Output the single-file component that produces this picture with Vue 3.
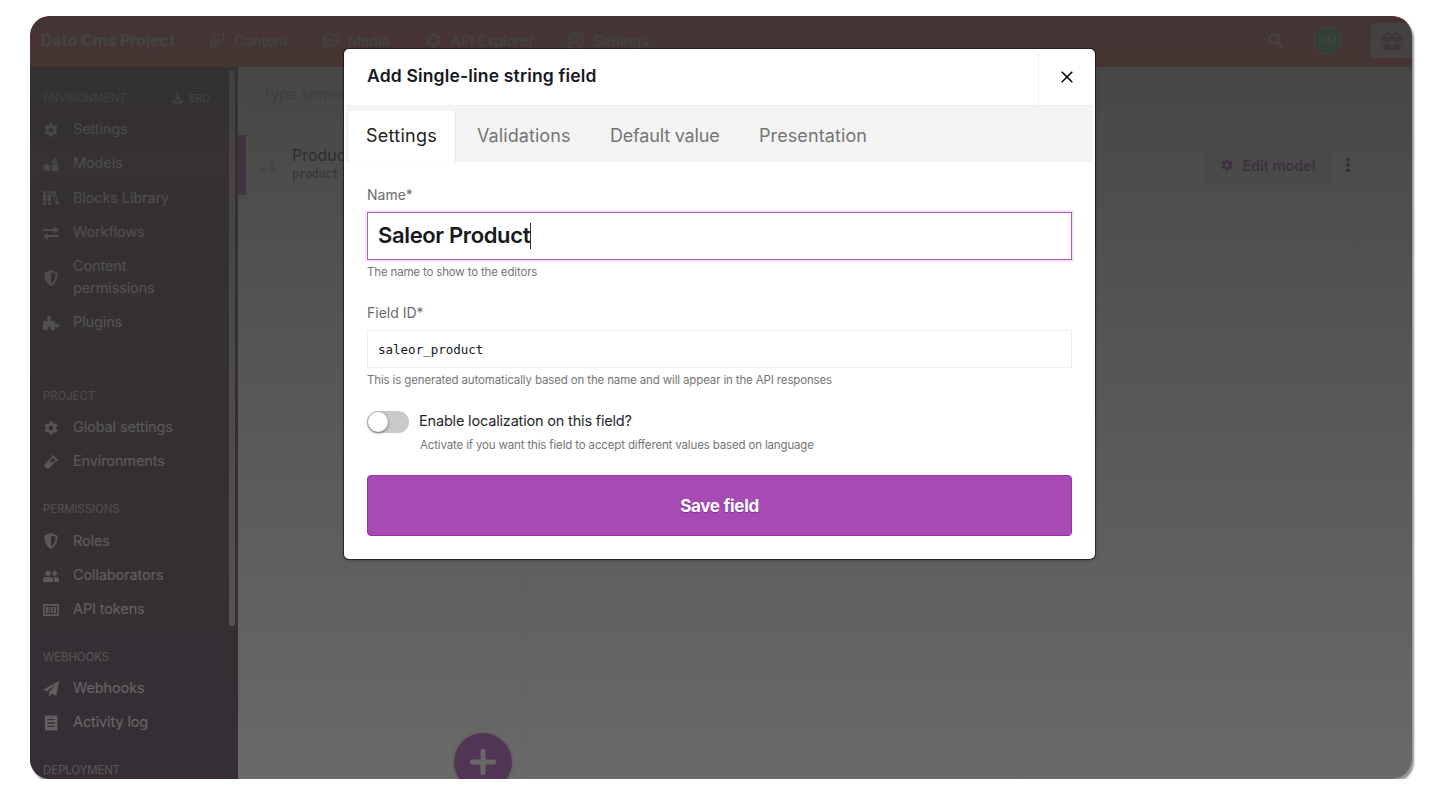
<script setup>
const shapes = 'M12 1l5.5 9h-11zM6 12.5a5 5 0 1 1 0 10 5 5 0 0 1 0-10zM13.5 13h9v9h-9z'
const gear =
  'M19.4 13a7.8 7.8 0 0 0 0-2l2.5-1.9-2.5-4.2-2.9 1.2a7.5 7.5 0 0 0-1.8-1L14.3 2H9.7l-.4 3.1a7.5 7.5 0 0 0-1.8 1L4.6 4.9 2.1 9.1 4.6 11a7.8 7.8 0 0 0 0 2l-2.5 1.9 2.5 4.2 2.9-1.2a7.5 7.5 0 0 0 1.8 1l.4 3.1h4.6l.4-3.1a7.5 7.5 0 0 0 1.8-1l2.9 1.2 2.5-4.2zM12 8.6a3.4 3.4 0 1 1 0 6.8 3.4 3.4 0 0 1 0-6.8z'
const shield = 'M12 0l10 4c0 9-3 16-10 20C5 20 2 13 2 4zM12 3.2v17.3c4.6-3 6.8-8 7-14.5z'
const sideShapes = 'M17.500 1l5.500 9.500H12zM5.500 12.500a5 5 0 1 1 0 10 5 5 0 0 1 0-10zM13 12.500h10v10H13z'
const groups = [
  {
    title: 'ENVIRONMENT',
    erd: true,
    items: [
      { t: 'Settings', d: gear },
      { t: 'Models', d: sideShapes, on: true },
      {
        t: 'Blocks Library',
        d: 'M0 2h5v3H0zM0 6.5h5V17H0zM0 18.5h5V22H0zM7 2h5v3H7zM7 6.5h5V17H7zM7 18.5h5V22H7zM13 3l5-1.5 6 19-5 1.5zM15.3 5.5l3.700 12 2-.6-3.700-12z'
      },
      { t: 'Workflows', d: 'M0 6h17V2l7 5.5-7 5.5V9H0zM24 15H7v-3.5L0 17l7 5.5V18h17z' },
      { t: 'Content permissions', two: true, d: shield },
      {
        t: 'Plugins',
        d: 'M0 9h7V6.5a3 3 0 1 1 4 0V9h7v5h2a2.5 2.5 0 1 1 0 4h-2v5h-6v-3a2.5 2.5 0 0 0-5 0v3H0z'
      }
    ]
  },
  {
    title: 'PROJECT',
    split: true,
    items: [
      { t: 'Global settings', d: gear },
      {
        t: 'Environments',
        d: 'M15 1l8 8-2 2-1-.5L9 21.5A5 5 0 0 1 2.5 15L13.5 4 13 3zM15.5 5.5L9.5 12h7l2-2.5z'
      }
    ]
  },
  {
    title: 'PERMISSIONS',
    items: [
      { t: 'Roles', d: shield },
      {
        t: 'Collaborators',
        d: 'M7.5 4a4 4 0 1 1 0 8 4 4 0 0 1 0-8zM17.5 4.5a3.5 3.5 0 1 1 0 7 3.5 3.5 0 0 1 0-7zM0 21v-3c0-3 2-4.5 4.5-4.5h6c2.5 0 4.5 1.5 4.5 4.5v3zM17 21v-3c0-2-.5-3.3-1.5-4.5H19c3 0 5 1.5 5 4.5v3z'
      },
      {
        t: 'API tokens',
        d: 'M0 3h24v18H0zM2.5 5.5v13h19v-13zM4.5 7.5H8v9H4.5zM9.5 7.5h1.500v9H9.5zM12.5 7.5H15v9h-2.500zM16.5 7.5h3v9h-3z'
      }
    ]
  },
  {
    title: 'WEBHOOKS',
    items: [
      { t: 'Webhooks', d: 'M24 0l-4 22-7-3-4 5v-7L20 4 6 15.500 0 13z' },
      {
        t: 'Activity log',
        d: 'M3 0l2.5 2L8 0l2.5 2L12 0l2.5 2L17 0l2 2 2.5-2v24L19 22l-2 2-2.5-2-2.5 2-1.500-2L8 24l-2.5-2L3 24zM6.5 6v2h11V6zM6.5 11v2h11v-2zM6.5 16v2h11v-2z'
      }
    ]
  },
  { title: 'DEPLOYMENT', items: [] }
]
const tabs = ['Settings', 'Validations', 'Default value', 'Presentation']
</script>

<template>
  <div class="frame">
    <header class="top">
      <span class="brand">Dato Cms Project</span>
      <nav>
        <a class="n1">
          <svg viewBox="0 0 24 24" class="line"><path d="M1 23L16 8M4.500 19.500C2 12 8 4 23 1c0 9-5 19-18.500 18.500M9 15h7M12.500 11.500h6.500" /></svg>
          Content</a>
        <a class="n2">
          <svg viewBox="0 0 24 24" class="line"><rect x="4.500" y="3" width="18.500" height="14.500" rx="2.500" /><path d="M4.500 6.500C2 6.500 1 7.500 1 9v9c0 2 1 3 3 3h13c1.500 0 2.500-1 2.500-3M5 15.500l5-5.500 4.500 4.500L17.500 11l5 5" /><circle cx="16" cy="7" r="1.200" /></svg>
          Media</a>
        <a class="n3">
          <svg viewBox="0 0 24 24" class="line"><path d="M12 3l8 4.500v9L12 21l-8-4.500v-9zM12 3l8 13.500H4z" /><g class="dots"><circle cx="12" cy="3" r="2" /><circle cx="20" cy="7.500" r="2" /><circle cx="20" cy="16.500" r="2" /><circle cx="12" cy="21" r="2" /><circle cx="4" cy="16.500" r="2" /><circle cx="4" cy="7.500" r="2" /></g></svg>
          API Explorer</a>
        <a class="n4">
          <svg viewBox="0 0 24 24" class="line"><path d="M10 1.500h4l.7 3 2.300 1 2.700-1.600 2.700 2.700-1.600 2.700 1 2.300 1 .4v3l-2 .7-1 2.300 1.600 2.700-2.700 2.700-2.700-1.600-2.300 1-.7 1.400h-3l-.7-1.400-2.300-1-2.700 1.600-2.700-2.700L5.200 18l-1-2.300-2.700-.7v-4l2.700-.7 1-2.300L3.600 5.300l2.700-2.700L9 4.200z" /><circle cx="12" cy="12" r="4" /></svg>
          Settings</a>
      </nav>
      <div class="tools">
        <svg viewBox="0 0 24 24" class="find"><circle cx="9.500" cy="9.500" r="7.500" /><path d="M15 15l7.500 7.500" /></svg>
        <i class="rule"></i>
        <span class="avatar">DM</span>
        <span class="gift">
          <svg viewBox="0 0 24 22"><path d="M0 6h24v6H0zM2 14h9v8H2zM13 14h9v8h-9z" /><path class="bow" d="M12 6C8-1 3 1 4.500 6M12 6c4-7 9-5 7.500 0" /></svg>
        </span>
      </div>
    </header>

    <div class="body">
      <aside class="side">
        <section v-for="g in groups" :key="g.title" :class="{ split: g.split }">
          <h6>
            <span>{{ g.title }}</span>
            <span v-if="g.erd" class="erd"><svg viewBox="0 0 24 24"><path d="M9.500 0h5v8H20l-8 8-8-8h5.500zM0 15h5l5 4h4l5-4h5v8H0z" /></svg>ERD</span>
          </h6>
          <div v-for="i in g.items" :key="i.t" class="item" :class="{ on: i.on, two: i.two }">
            <svg viewBox="0 0 24 24"><path fill-rule="evenodd" :d="i.d" /></svg>
            <span>{{ i.t }}</span>
          </div>
        </section>
        <i class="scroll"></i>
      </aside>

      <div class="models">
        <div class="search">Type something...</div>
        <div class="model">
          <svg viewBox="0 0 24 24"><path :d="sideShapes" /></svg>
          <div><b>Product</b><code>product</code></div>
        </div>
        <span class="fab"><svg viewBox="0 0 26 26"><path d="M13 2.500v21M2.500 13h21" /></svg></span>
      </div>

      <main class="detail">
        <div class="actions">
          <span class="edit"><svg viewBox="0 0 24 24"><path fill-rule="evenodd" :d="gear" /></svg>Edit model</span>
          <svg class="kebab" viewBox="0 0 4 16"><circle cx="2" cy="2" r="2" /><circle cx="2" cy="8" r="2" /><circle cx="2" cy="14" r="2" /></svg>
        </div>
        <div class="card"></div>
      </main>
    </div>

    <div class="shade"></div>

    <div class="modal">
      <div class="mhead">
        <h2>Add Single-line string field</h2>
        <span class="close"><svg viewBox="0 0 12 12"><path d="M.7.7l10.600 10.600M11.300.7L.7 11.300" /></svg></span>
      </div>
      <div class="tabs">
        <span v-for="(t, k) in tabs" :key="t" :class="['tab', 't' + k]">{{ t }}</span>
      </div>
      <div class="form">
        <label>Name*</label>
        <div class="input big"><span>Saleor Product</span><i></i></div>
        <p>The name to show to the editors</p>
        <label class="second">Field ID*</label>
        <div class="input mono">saleor_product</div>
        <p class="p2">This is generated automatically based on the name and will appear in the API responses</p>
        <div class="switchrow">
          <span class="switch"><i></i></span>
          <div>
            <strong>Enable localization on this field?</strong>
            <em>Activate if you want this field to accept different values based on language</em>
          </div>
        </div>
        <button>Save field</button>
      </div>
    </div>
  </div>
</template>

<style>
body { background: #fff; }
</style>

<style scoped>
* { box-sizing: border-box; }
.frame {
  position: relative; width: 1382px; height: 763px; margin: 16px 0 0 30px;
  border-radius: 20px; overflow: hidden; background: #fff;
  font-family: Inter, "Liberation Sans", sans-serif; color: #222;
  display: flex; flex-direction: column;
  box-shadow: 2px 3px 2px rgba(0, 0, 0, .42);
}
svg { display: block; flex: none; fill: currentColor; }
.top { height: 51px; flex: none; background: #ff4a40; color: #e8fff4; display: flex; align-items: center; padding: 0 0 3px 11px; }
.brand { width: 167px; font-size: 16px; font-weight: 700; letter-spacing: -.05px; white-space: nowrap; }
nav { display: flex; font-size: 14.5px; letter-spacing: -.1px; }
nav a { display: flex; align-items: center; gap: 9px; white-space: nowrap; }
nav svg { width: 17px; height: 17px; }
.line { fill: none; stroke: currentColor; stroke-width: 1.6; }
.dots { fill: currentColor; stroke: none; }
.n1 { width: 114px; }
.n2 { width: 103px; }
.n3 { width: 125px; }
.n4 { width: 118px; height: 48px; padding-left: 17px; background: rgba(255, 255, 255, .09); letter-spacing: .1px; }
.tools { margin-left: auto; display: flex; align-items: center; }
.find { width: 15px; height: 15px; fill: none; stroke: #fff; stroke-width: 3.4; margin-right: 14px; }
.rule { width: 1px; height: 48px; background: rgba(255, 255, 255, .15); margin-right: 15px; }
.avatar { width: 29px; height: 29px; border-radius: 50%; background: #30c060; border: 1.5px solid #eee; color: #fff; font-size: 11px; display: grid; place-items: center; margin-right: 29px; }
.gift { width: 41px; height: 35px; background: #f0dfe0; border-radius: 4px 0 0 4px; color: #a13fb5; padding: 9px 0 0 11px; }
.gift svg { width: 20px; height: 18px; }
.bow { fill: none; stroke: currentColor; stroke-width: 2.5; }
.body { flex: 1; display: flex; min-height: 0; }
.side { position: relative; width: 208px; flex: none; background: #42243e; color: #fff; overflow: hidden; padding-top: 17px; }
section { margin-bottom: 17px; }
section.split { border-top: 1px solid #5d3c59; margin-top: 24px; padding-top: 18px; width: 196px; }
section:has(+ .split) { margin-bottom: 0; }
h6 { margin: 0; height: 28px; padding: 0 28px 0 13px; display: flex; justify-content: space-between; align-items: center; font-size: 11.5px; font-weight: 400; opacity: .68; letter-spacing: -.12px; white-space: nowrap; }
.erd { display: flex; align-items: center; gap: 6px; font-size: 11px; }
.erd svg { width: 11px; height: 11px; }
.item { width: 196px; height: 34.2px; display: flex; align-items: center; padding-left: 13px; font-size: 14.5px; line-height: 21.7px; letter-spacing: -.12px; }
.item svg { width: 16px; height: 16px; margin: 2px 14px 0 0; opacity: .9; }
.item.two { height: 56px; }
.item.two span { width: 100px; }
.item.on { background: #4d2c4a; }
.scroll { position: absolute; left: 199px; top: 3px; width: 6px; height: 556px; border-radius: 3px; background: #c5bcc4; }
.models { position: relative; width: 289px; flex: none; border-right: 1px solid #ececec; background: #fff; }
.search { margin: 10px 0 0 14px; height: 35px; border: 1px solid #e6e6e6; padding-left: 9px; line-height: 33px; font-size: 15px; color: #a8a8a8; }
.model { margin-top: 23px; height: 60px; border-left: 8px solid #a83fb9; display: flex; align-items: center; }
.model svg { width: 16px; height: 16px; margin: 2px 16px 0 14px; color: #ccc; }
.model b { display: block; margin-top: -1px; font-weight: 400; font-size: 16px; line-height: 20px; color: #000; }
.model code { display: block; font: 11.5px/19px "DejaVu Sans Mono", monospace; color: #333; letter-spacing: -.3px; }
.fab { position: absolute; left: 215.5px; top: 666px; width: 58px; height: 58px; border-radius: 50%; background: #a83fb9; display: grid; place-items: center; box-shadow: 0 1px 4px rgba(0, 0, 0, .3); }
.fab svg { width: 26px; height: 26px; fill: none; stroke: #fff; stroke-width: 5; stroke-linecap: round; }
.detail { flex: 1; padding: 78px 58px 0 40px; }
.actions { display: flex; justify-content: flex-end; align-items: center; gap: 15px; }
.edit { width: 126px; height: 40px; border-radius: 4px; background: #f6ecf9; color: #8d209f; display: flex; align-items: center; justify-content: center; gap: 8px; font-size: 14.5px; font-weight: 600; letter-spacing: -.05px; }
.edit svg { width: 14px; height: 14px; }
.kebab { width: 4px; height: 14px; color: #111; margin-right: 4px; }
.card { height: 74px; margin-top: 52px; border: 1px solid #f4f4f4; box-shadow: 0 1px 2px rgba(0, 0, 0, .1); border-radius: 3px; }
.shade { position: absolute; inset: 0; background: linear-gradient(rgba(50, 50, 49, .915), rgba(50, 50, 49, .84) 38%, rgba(50, 50, 49, .73)); }
.modal { position: absolute; left: 314px; top: 33px; width: 751px; height: 510px; background: #fff; border: 2px solid #fff; border-radius: 5px; box-shadow: 0 0 0 1px rgba(20, 16, 16, .6), 0 1px 3px rgba(0, 0, 0, .4); }
.mhead { height: 55px; display: flex; justify-content: space-between; border-bottom: 1px solid #efefef; }
h2 { margin: 0 0 0 21px; font-size: 17.5px; font-weight: 600; line-height: 50px; color: #15181c; letter-spacing: .17px; }
.close { width: 55px; border-left: 1px solid #efefef; display: grid; place-items: center; padding: 0 0 2px 1px; }
.close svg { width: 12px; height: 12px; fill: none; stroke: #000; stroke-width: 1.5; }
.tabs { height: 56px; background: #f4f4f4; display: flex; padding: 5px 0 0 3px; font-size: 18px; line-height: 50px; color: #757575; }
.tab { white-space: nowrap; }
.t0 { width: 106px; height: 51px; padding-left: 17px; background: #fff; color: #1c1e22; border-radius: 3px 3px 0 0; box-shadow: 1px 0 1px #e6e6e6; letter-spacing: .25px; }
.t1 { margin-left: 22px; width: 133px; letter-spacing: .08px; }
.t2 { width: 149px; letter-spacing: -.18px; }
.t3 { letter-spacing: .1px; }
.form { padding: 21px 21px 0; }
label { display: block; height: 29px; font-size: 14px; line-height: 24px; color: #6b6b6b; }
.input { border: 1px solid #ededed; padding-left: 10px; color: #15181c; display: flex; }
.big { height: 48px; border: 1.5px solid #b158c1; box-shadow: 0 0 0 2px #f7e6fa; font-size: 22px; font-weight: 600; line-height: 44px; letter-spacing: -.35px; }
.big i { width: 1px; height: 26px; background: #333; margin-top: 10px; }
.mono { height: 38px; font: 12.5px/37px "DejaVu Sans Mono", monospace; }
p { margin: 3px 0 0; font-size: 11.5px; line-height: 18px; color: #757575; white-space: nowrap; letter-spacing: -.16px; }
.p2 { letter-spacing: -.14px; }
.second { margin-top: 20px; height: 29px; }
.switchrow { display: flex; margin-top: 20px; height: 66px; }
.switch { width: 42px; height: 22px; border-radius: 11px; background: #c9c9c9; margin: 2px 10px 0 0; padding: 1px; }
.switch i { display: block; width: 20px; height: 20px; border-radius: 50%; background: #fff; box-shadow: 0 1px 3px rgba(0, 0, 0, .5); }
strong { display: block; font-weight: 400; font-size: 14.5px; line-height: 24px; color: #24272b; white-space: nowrap; letter-spacing: -.18px; }
em { display: block; margin: 3px 0 0 1px; font-style: normal; font-size: 11.5px; line-height: 18px; color: #757575; white-space: nowrap; letter-spacing: -.15px; }
button { display: block; width: 100%; height: 61px; padding: 0; border: 1px solid #9a2fab; border-radius: 4px; background: #a74ab3; color: #fff; font: 700 17px Inter, sans-serif; letter-spacing: -.3px; text-shadow: 0 1px 1px rgba(90, 0, 100, .4); }
</style>
